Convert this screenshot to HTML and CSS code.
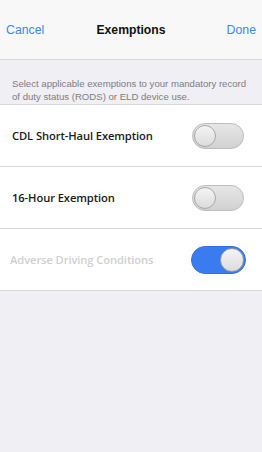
FILE: index.html
```html
<!DOCTYPE html>
<html>
<head>
<meta charset="utf-8">
<link rel="stylesheet" href="styles.css">
</head>
<body>
<div class="nav">
  <span class="nav-btn">Cancel</span>
  <span class="nav-title">Exemptions</span>
  <span class="nav-btn right">Done</span>
</div>
<p class="desc">Select applicable exemptions to your mandatory record of duty status (RODS) or ELD device use.</p>
<div class="list">
  <div class="row">
    <span class="label">CDL Short-Haul Exemption</span>
    <span class="toggle"><span class="knob"></span></span>
  </div>
  <div class="row">
    <span class="label">16-Hour Exemption</span>
    <span class="toggle"><span class="knob"></span></span>
  </div>
  <div class="row">
    <span class="label disabled">Adverse Driving Conditions</span>
    <span class="toggle on"><span class="knob"></span></span>
  </div>
</div>
</body>
</html>
```
FILE: styles.css
```css
html, body {
  margin: 0;
  padding: 0;
  background: #efeff4;
  height: 100%;
}
body {
  font-family: "Liberation Sans", Arial, sans-serif;
}
.nav {
  height: 60px;
  background: #f8f8f8;
  border-bottom: 1px solid #d8d8dc;
  box-sizing: border-box;
  display: grid;
  grid-template-columns: 1fr auto 1fr;
  align-items: center;
  padding: 1px 6px 0 6px;
}
.nav-btn {
  color: #3f86f1;
  font-size: 12.3px;
}
.nav-btn.right {
  justify-self: end;
}
.nav-title {
  color: #111;
  font-size: 12.2px;
  font-weight: bold;
}
.desc {
  margin: 0;
  padding: 17px 10px 4px 12px;
  font-size: 9.6px;
  line-height: 13px;
  color: #7d7d82;
  height: 45px;
  box-sizing: border-box;
  border-bottom: 1px solid #d8d8dc;
}
.list {
  background: #fff;
}
.row {
  height: 62px;
  box-sizing: border-box;
  border-bottom: 1px solid #d8d8dc;
  display: flex;
  align-items: center;
  justify-content: space-between;
  padding: 0 18px 0 12px;
}
.label {
  font-family: "Open Sans", sans-serif;
  font-weight: 600;
  font-size: 11.2px;
  letter-spacing: -0.1px;
  color: #1a1a1a;
}
.label.disabled {
  color: #cfcfd2;
  margin-left: -2px;
}
.toggle {
  width: 52px;
  height: 26px;
  border-radius: 13px;
  box-sizing: border-box;
  border: 1px solid #bdbdbd;
  background: linear-gradient(#e6e6e6, #d2d2d2);
  display: flex;
  align-items: center;
  padding: 1px;
}
.knob {
  width: 22px;
  height: 22px;
  border-radius: 50%;
  box-sizing: border-box;
  border: 1.5px solid #a8a8a8;
  background: linear-gradient(#f4f4f4, #dcdcdc);
}
.toggle.on {
  width: 55px;
  height: 28px;
  border-radius: 14px;
  margin-right: -2px;
  background: #3a7cf0;
  border-color: #3572dd;
  justify-content: flex-end;
}
.toggle.on .knob {
  width: 24px;
  height: 24px;
  border: 1px solid #9a9a9a;
}
```
